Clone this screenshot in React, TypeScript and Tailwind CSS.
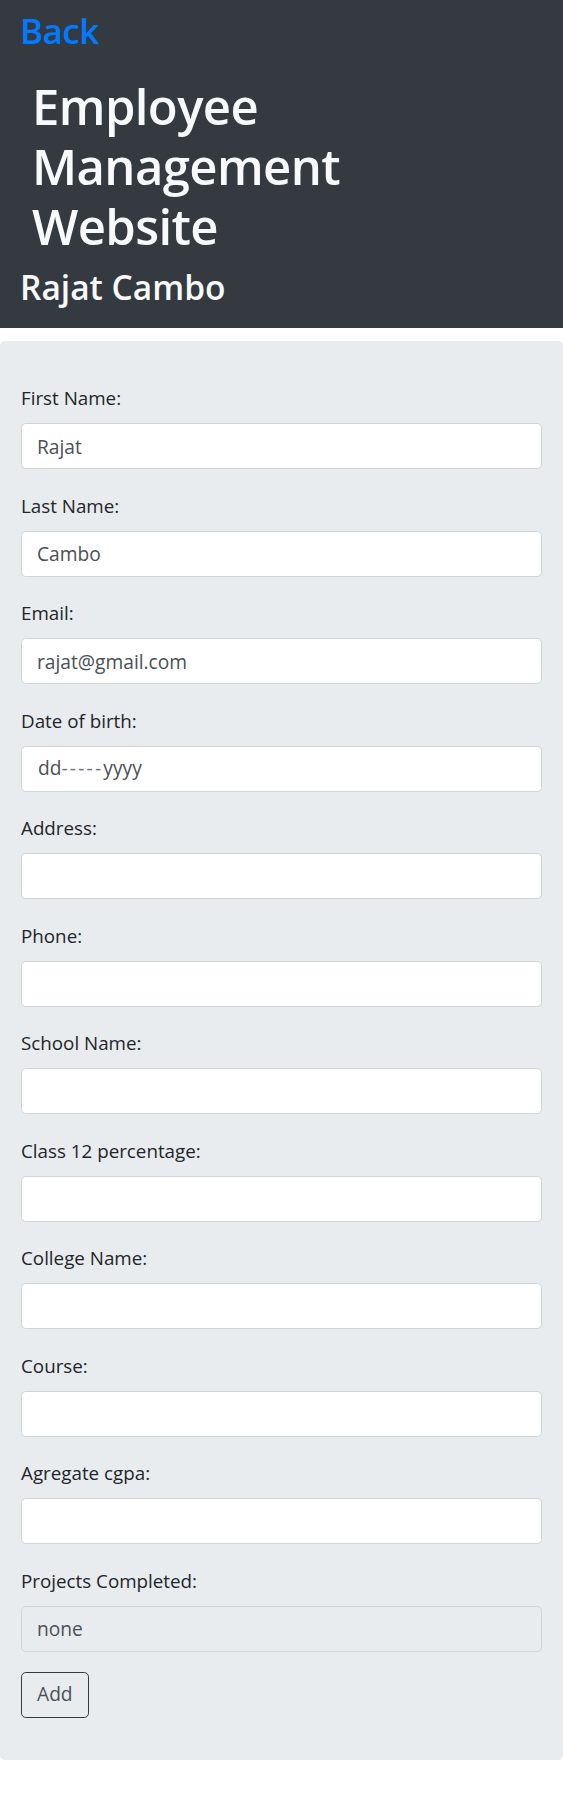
import React from 'react';

const fields: { label: string; value?: string; disabled?: boolean; date?: boolean }[] = [
  { label: 'First Name:', value: 'Rajat' },
  { label: 'Last Name:', value: 'Cambo' },
  { label: 'Email:', value: 'rajat@gmail.com' },
  { label: 'Date of birth:', date: true },
  { label: 'Address:' },
  { label: 'Phone:' },
  { label: 'School Name:' },
  { label: 'Class 12 percentage:' },
  { label: 'College Name:' },
  { label: 'Course:' },
  { label: 'Agregate cgpa:' },
  { label: 'Projects Completed:', value: 'none', disabled: true },
];

export default function App() {
  return (
    <div className="min-h-screen bg-white font-['Open_Sans',sans-serif] text-[#212529]">
      <header className="bg-[#343a40] px-[20px] pt-[10px] pb-[20px]">
        <a href="#" className="block text-[35px] leading-[42px] font-semibold tracking-[-0.5px] text-[#007bff]">
          Back
        </a>
        <h1 className="mt-[24px] w-[330px] pl-[12px] text-[49px] leading-[60px] font-semibold tracking-[-0.6px] text-[#f8f9fa]">
          Employee Management Website
        </h1>
        <h2 className="mt-[10px] text-[33.5px] leading-[42px] font-semibold text-[#f8f9fa]">
          Rajat Cambo
        </h2>
      </header>

      <form className="mt-[13px] rounded-[5px] bg-[#e9ecef] px-[21px] pt-[43px] pb-[42px]">
        {fields.map((f, i) => (
          <div key={f.label} className={i === fields.length - 1 ? 'mb-[20px]' : 'mb-[22.5px]'}>
            <label className="block mb-[10px] text-[18.8px] leading-[29px]">{f.label}</label>
            {f.date ? (
              <div className="flex h-[46px] w-full items-center rounded-[4.8px] border border-[#ced4da] bg-white px-[16px] text-[19.2px] text-[#495057]">
                <span>dd</span>
                <span className="tracking-[2.2px] text-[#6c757d]">-----</span>
                <span>yyyy</span>
              </div>
            ) : (
              <input
                type="text"
                readOnly
                disabled={f.disabled}
                defaultValue={f.value ?? ''}
                className={`block w-full h-[46px] rounded-[4.8px] border border-[#ced4da] px-[15px] text-[19.2px] text-[#495057] outline-none ${
                  f.disabled ? 'bg-[#e9ecef]' : 'bg-white'
                }`}
              />
            )}
          </div>
        ))}
        <button
          type="button"
          className="h-[46px] rounded-[4.8px] border border-[#343a40] px-[15px] text-[19.2px] text-[#495057]"
        >
          Add
        </button>
      </form>
    </div>
  );
}
